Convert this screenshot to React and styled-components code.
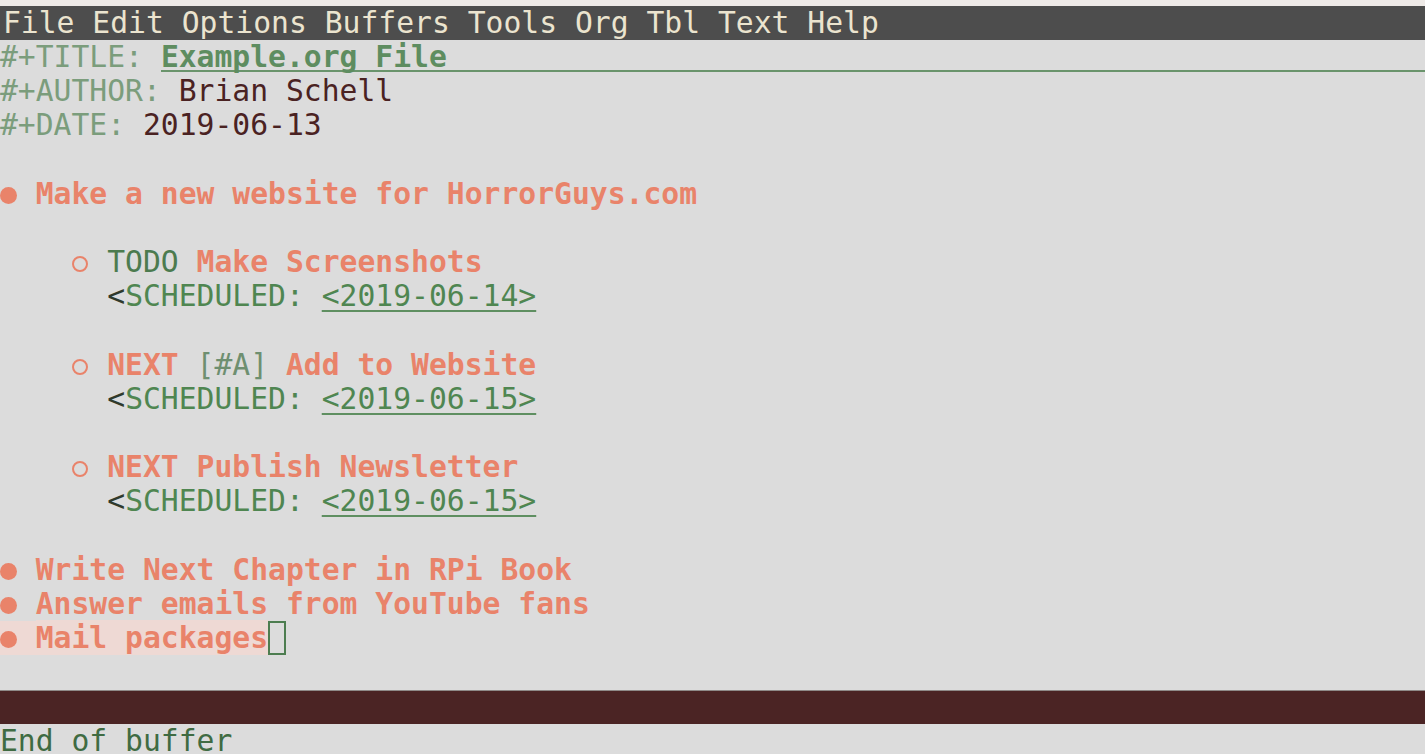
import styled, { createGlobalStyle } from "styled-components";

const GlobalStyle = createGlobalStyle`
html, body {
    margin: 0;
    padding: 0;
    background: #dcdcdc;
    overflow: hidden;
}
`;

const Frame = styled.div`
width: 1425px;
height: 754px;
overflow: hidden;
display: flex;
flex-direction: column;
background: #dcdcdc;
font-family: "DejaVu Sans Mono", "Liberation Mono", monospace;
font-size: 29.7px;
`;

const TopEdge = styled.div`
height: 6px;
flex-shrink: 0;
background: #eeeae7;
`;

const MenuBar = styled.div`
height: 34px;
line-height: 34px;
flex-shrink: 0;
padding-left: 3px;
background: #4d4d4d;
color: #ebe4cf;
white-space: pre;
`;

const Buffer = styled.div`
flex-shrink: 0;
`;

const Line = styled.div`
height: 34.2px;
line-height: 34.2px;
white-space: pre;
display: ${props => props.$flex ? 'flex' : 'block'};
`;

const Keyword = styled.span`
color: #7b9d7c;
`;

const DocTitle = styled.span`
flex: 1;
color: #5e8d60;
font-weight: bold;
background: linear-gradient(#6a946c, #6a946c) left calc(100% - 2px) / 100% 2px no-repeat;
`;

const Meta = styled.span`
color: #4a2222;
`;

const Heading = styled.span`
color: #e9836a;
font-weight: bold;
background: ${props => props.$hl ? '#eed9d4' : 'transparent'};
`;

const Todo = styled.span`
color: #4c7b4f;
`;

const Priority = styled.span`
color: #6e8f70;
`;

const Angle = styled.span`
color: #2f3a2c;
`;

const Sched = styled.span`
color: #4f8651;
`;

const DateLink = styled.span`
color: #4f8651;
text-decoration: underline;
text-decoration-thickness: 2px;
text-underline-offset: 4px;
text-decoration-color: #5f8f61;
`;

const Bullet = styled.span`
display: inline-block;
box-sizing: border-box;
width: ${props => props.$level === 1 ? 17 : 16}px;
height: ${props => props.$level === 1 ? 17 : 16}px;
margin: 0 calc((1ch - ${props => props.$level === 1 ? 17 : 16}px) / 2);
border-radius: 50%;
vertical-align: baseline;
${props => props.$level === 1 ? `
background: #e9836a;
` : `
border: 2px solid #e9836a;
`}
`;

const HlRegion = styled.span`
display: inline-block;
height: 34.2px;
vertical-align: top;
background: #eed9d4;
`;

const Cursor = styled.span`
display: inline-block;
box-sizing: border-box;
width: 1ch;
height: 34.2px;
vertical-align: top;
border: 2px solid #4d7d50;
`;

const ModeLine = styled.div`
height: 34px;
flex-shrink: 0;
box-sizing: border-box;
border-top: 1px solid #8f8a88;
background: #4b2424;
`;

const Echo = styled.div`
height: 34px;
line-height: 34px;
flex-shrink: 0;
color: #3f6b42;
white-space: pre;
`;

function Scheduled({ date }) {
    return (
        <Line>
            {"      "}<Angle>{"<"}</Angle><Sched>{"SCHEDULED:"}</Sched>{" "}<DateLink>{"<" + date + ">"}</DateLink>
        </Line>
    );
}

function SubItem({ children }) {
    return (
        <Line>
            {"    "}<Bullet $level={2} />{" "}{children}
        </Line>
    );
}

export default function App() {
    return (
        <Frame>
            <GlobalStyle />
            <TopEdge />
            <MenuBar>File Edit Options Buffers Tools Org Tbl Text Help</MenuBar>
            <Buffer>
                <Line $flex>
                    <Keyword>{"#+TITLE: "}</Keyword>
                    <DocTitle>Example.org File</DocTitle>
                </Line>
                <Line>
                    <Keyword>{"#+AUTHOR: "}</Keyword><Meta>Brian Schell</Meta>
                </Line>
                <Line>
                    <Keyword>{"#+DATE: "}</Keyword><Meta>2019-06-13</Meta>
                </Line>
                <Line />
                <Line>
                    <Bullet $level={1} />{" "}<Heading>Make a new website for HorrorGuys.com</Heading>
                </Line>
                <Line />
                <SubItem>
                    <Todo>TODO</Todo>{" "}<Heading>Make Screenshots</Heading>
                </SubItem>
                <Scheduled date="2019-06-14" />
                <Line />
                <SubItem>
                    <Heading>NEXT</Heading>{" "}<Priority>[#A]</Priority>{" "}<Heading>Add to Website</Heading>
                </SubItem>
                <Scheduled date="2019-06-15" />
                <Line />
                <SubItem>
                    <Heading>NEXT Publish Newsletter</Heading>
                </SubItem>
                <Scheduled date="2019-06-15" />
                <Line />
                <Line>
                    <Bullet $level={1} />{" "}<Heading>Write Next Chapter in RPi Book</Heading>
                </Line>
                <Line>
                    <Bullet $level={1} />{" "}<Heading>Answer emails from YouTube fans</Heading>
                </Line>
                <Line>
                    <HlRegion>
                        <Bullet $level={1} />{" "}<Heading $hl>Mail packages</Heading>
                    </HlRegion>
                    <Cursor />
                </Line>
                <Line />
            </Buffer>
            <ModeLine />
            <Echo>End of buffer</Echo>
        </Frame>
    );
}
